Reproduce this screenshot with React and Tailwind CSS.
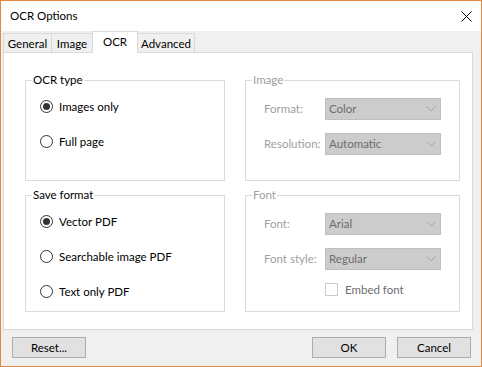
import { useState } from 'react';

function Radio({ checked, label, onClick }) {
  return (
    <div className="h-[35px] flex items-center pl-[14px] cursor-default" onClick={onClick}>
      <span className="w-[13px] h-[13px] rounded-full border border-[#333333] bg-white flex items-center justify-center">
        {checked && <span className="w-[7px] h-[7px] rounded-full bg-[#333333]" />}
      </span>
      <span className="ml-[6px] text-black">{label}</span>
    </div>
  )
}

function Dropdown({ value }) {
  return (
    <div className="w-[116px] h-[22px] border border-[#bfbfbf] bg-[#cccccc] flex items-center justify-between pl-[3px] pr-[4px] text-[#6d6d6d]">
      <span>{value}</span>
      <svg width="10" height="6" viewBox="0 0 10 6">
        <path d="M0.5 0.5 L5 5 L9.5 0.5" fill="none" stroke="#a6a6a6" strokeWidth="1" />
      </svg>
    </div>
  )
}

function Field({ label, value }) {
  return (
    <div className="h-[35px] flex items-center pl-[18px]">
      <span className="w-[61px] text-[#a0a0a0]">{label}</span>
      <Dropdown value={value} />
    </div>
  )
}

function Group({ title, disabled, className, children }) {
  return (
    <fieldset className={`border border-[#dcdcdc] p-0 m-0 min-w-0 ${className}`}>
      <legend className={`ml-[6px] px-[1px] leading-[16px] ${disabled ? 'text-[#a0a0a0]' : 'text-black'}`}>
        {title}
      </legend>
      {children}
    </fieldset>
  )
}

const tabs = ['General', 'Image', 'OCR', 'Advanced']
const tabWidths = { General: 'w-[49px]', Image: 'w-[42px]', OCR: 'w-[46px]', Advanced: 'w-[58px]' }

export default function App() {
  const [ocrType, setOcrType] = useState('images')
  const [saveFormat, setSaveFormat] = useState('vector')

  return (
    <div className="w-[482px] h-[367px] border border-[#e3883f] bg-[#f0f0f0] flex flex-col font-['Lato',Arial,sans-serif] text-[11.5px] leading-[16px] text-black select-none">
      {/* title bar */}
      <div className="h-[30px] bg-white flex items-center justify-between pl-[9px] pr-[9px]">
        <span>OCR Options</span>
        <svg width="11" height="11" viewBox="0 0 11 11">
          <path d="M0.5 0.5 L10.5 10.5 M10.5 0.5 L0.5 10.5" stroke="#000" strokeWidth="1" />
        </svg>
      </div>

      {/* tabs */}
      <div className="h-[21px] flex items-end pl-[2px] relative z-10">
        {tabs.map((t, i) => (
          t === 'OCR' ? (
            <div key={t} className={`${tabWidths[t]} h-[22px] -mb-px -ml-px bg-white border border-b-0 border-[#d9d9d9] flex justify-center pt-[2px]`}>
              {t}
            </div>
          ) : (
            <div key={t} className={`${tabWidths[t]} h-[19px] ${i > 0 ? '-ml-px' : ''} bg-[#f0f0f0] border border-b-0 border-[#d9d9d9] flex justify-center pt-[2px]`}>
              {t}
            </div>
          )
        ))}
      </div>

      {/* tab page */}
      <div className="ml-[2px] w-[470px] h-[278px] bg-white border border-[#d9d9d9] pl-[21px] pt-[19px]">
        <div className="grid grid-cols-[200px_215px] grid-rows-[109px_125px] gap-x-[20px] gap-y-[6px]">
          <Group title="OCR type">
            <div className="mt-[1px]">
              <Radio label="Images only" checked={ocrType === 'images'} onClick={() => setOcrType('images')} />
              <Radio label="Full page" checked={ocrType === 'full'} onClick={() => setOcrType('full')} />
            </div>
          </Group>

          <Group title="Image" disabled>
            <div className="mt-[3px]">
              <Field label="Format:" value="Color" />
              <Field label="Resolution:" value="Automatic" />
            </div>
          </Group>

          <Group title="Save format">
            <div className="mt-[1px]">
              <Radio label="Vector PDF" checked={saveFormat === 'vector'} onClick={() => setSaveFormat('vector')} />
              <Radio label="Searchable image PDF" checked={saveFormat === 'searchable'} onClick={() => setSaveFormat('searchable')} />
              <Radio label="Text only PDF" checked={saveFormat === 'text'} onClick={() => setSaveFormat('text')} />
            </div>
          </Group>

          <Group title="Font" disabled>
            <div className="mt-[3px]">
              <Field label="Font:" value="Arial" />
              <Field label="Font style:" value="Regular" />
              <div className="h-[27px] flex items-center pl-[79px]">
                <span className="w-[13px] h-[13px] border border-[#cccccc] bg-white" />
                <span className="ml-[7px] text-[#6d6d6d]">Embed font</span>
              </div>
            </div>
          </Group>
        </div>
      </div>

      {/* buttons */}
      <div className="flex pt-[7px] pl-[11px] pr-[10px]">
        <button className="w-[74px] h-[21px] bg-[#e1e1e1] border border-[#adadad] text-black">Reset...</button>
        <div className="flex-1" />
        <button className="w-[74px] h-[21px] bg-[#e1e1e1] border border-[#adadad] text-black">OK</button>
        <button className="ml-[11px] w-[74px] h-[21px] bg-[#e1e1e1] border border-[#adadad] text-black">Cancel</button>
      </div>
    </div>
  )
}
